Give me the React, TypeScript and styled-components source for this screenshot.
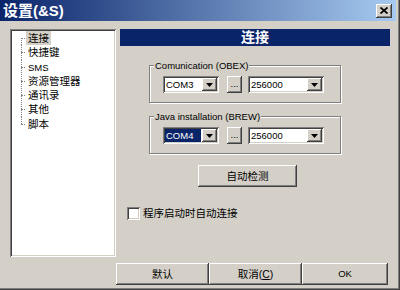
import React from "react";
import styled, { createGlobalStyle, css } from "styled-components";

const Global = createGlobalStyle`
  html, body { margin: 0; padding: 0; background: #d4d0c8; }
  body {
    font-family: "Liberation Sans", "Noto Sans CJK SC", sans-serif;
    font-size: 10.5px;
    color: #000;
  }
  * { box-sizing: border-box; }
`;

const latin = css`
  font-family: "Liberation Sans", sans-serif;
  font-size: 9.5px;
`;

const raised = css`
  background: #d4d0c8;
  box-shadow: inset -1px -1px #404040, inset 1px 1px #ffffff,
    inset -2px -2px #808080, inset 2px 2px #d4d0c8;
`;

const sunken = css`
  box-shadow: inset 1px 1px #808080, inset -1px -1px #ffffff,
    inset 2px 2px #404040, inset -2px -2px #d4d0c8;
`;

const Window = styled.div`
  width: 400px;
  height: 290px;
  background: #d4d0c8;
  display: flex;
  flex-direction: column;
  border-right: 1px solid #404040;
  border-bottom: 1px solid #404040;
  box-shadow: inset -1px -1px #808080;
  overflow: hidden;
`;

const TitleBar = styled.div`
  height: 21px;
  margin-right: 3px;
  display: flex;
  align-items: center;
  padding: 0 4px 0 3px;
  background: linear-gradient(to right, #0a246a, #a6caf0);
  color: #fff;
  font-weight: bold;
  font-size: 15px;
  line-height: 21px;
`;

const CloseButton = styled.div`
  width: 16px;
  height: 14px;
  margin-left: auto;
  ${raised};
  display: flex;
  align-items: center;
  justify-content: center;
`;

const Main = styled.div`
  display: flex;
  align-items: flex-start;
  padding: 8px 0 0 10px;
`;

const Tree = styled.div`
  width: 106px;
  height: 228px;
  background: #fff;
  ${sunken};
  padding: 2px;
`;

const TreeItem = styled.div<{ $first?: boolean; $last?: boolean }>`
  position: relative;
  height: 14.3px;
  line-height: 14px;
  padding-left: 14px;
  white-space: nowrap;
  &::before {
    content: "";
    position: absolute;
    left: 9px;
    top: 7px;
    width: 4px;
    border-top: 1px dotted #808080;
  }
  &::after {
    content: "";
    position: absolute;
    left: 9px;
    top: ${(p) => (p.$first ? "7px" : "0")};
    height: ${(p) => (p.$last || p.$first ? "7px" : "15px")};
    border-left: 1px dotted #808080;
  }
`;

const TreeLabel = styled.span<{ $selected?: boolean; $latin?: boolean }>`
  display: inline-block;
  padding: 0 2px;
  height: 14px;
  background: ${(p) => (p.$selected ? "#d4d0c8" : "transparent")};
  ${(p) => (p.$latin ? latin : "")};
`;

const RightCol = styled.div`
  margin-left: 4px;
  width: 270px;
  display: flex;
  flex-direction: column;
  align-items: flex-start;
`;

const Header = styled.div`
  width: 270px;
  height: 17px;
  background: #0a246a;
  color: #fff;
  font-weight: bold;
  font-size: 14px;
  line-height: 17px;
  text-align: center;
`;

const GroupBox = styled.div<{ $top: number }>`
  position: relative;
  margin-left: 29px;
  margin-top: ${(p) => p.$top}px;
  width: 192px;
  height: 38px;
  border: 1px solid #808080;
  box-shadow: inset 1px 1px #ffffff, 1px 1px #ffffff;
  padding: 10px 0 0 13px;
`;

const Legend = styled.span`
  position: absolute;
  top: -7px;
  left: 4px;
  padding: 0 1px;
  line-height: 13px;
  background: #d4d0c8;
  white-space: nowrap;
  ${latin};
`;

const Row = styled.div`
  display: flex;
  align-items: flex-start;
`;

const Combo = styled.div<{ $w: number; $gap?: number }>`
  width: ${(p) => p.$w}px;
  height: 17px;
  margin-left: ${(p) => p.$gap ?? 0}px;
  background: #fff;
  ${sunken};
  padding: 2px;
  display: flex;
`;

const ComboText = styled.div<{ $selected?: boolean }>`
  flex: 1;
  line-height: 13px;
  padding-left: 1px;
  margin-right: 1px;
  background: ${(p) => (p.$selected ? "#0a246a" : "transparent")};
  color: ${(p) => (p.$selected ? "#fff" : "#000")};
  ${latin};
`;

const ComboButton = styled.div`
  width: 15px;
  height: 13px;
  ${raised};
  display: flex;
  align-items: center;
  justify-content: center;
`;

const DotsButton = styled.div<{ $gap: number }>`
  width: 15px;
  height: 17px;
  margin-left: ${(p) => p.$gap}px;
  ${raised};
  display: flex;
  align-items: flex-end;
  justify-content: center;
  line-height: 12px;
  padding-bottom: 3px;
  ${latin};
`;

const PushButton = styled.div<{ $w: number; $latin?: boolean }>`
  width: ${(p) => p.$w}px;
  height: 22px;
  ${raised};
  display: flex;
  align-items: center;
  justify-content: center;
  line-height: 14px;
  ${(p) => (p.$latin ? latin : "")};
`;

const DetectWrap = styled.div`
  margin: 11px 0 0 78px;
`;

const CheckRow = styled.div`
  margin: 20px 0 0 7px;
  display: flex;
  align-items: center;
  gap: 3px;
  line-height: 13px;
`;

const CheckBox = styled.div`
  width: 13px;
  height: 13px;
  background: #fff;
  ${sunken};
`;

const Footer = styled.div`
  display: flex;
  margin-top: 6px;
  padding-left: 116px;
`;

const Arrow = () => (
  <svg width="7" height="4" viewBox="0 0 7 4">
    <path d="M0 0H7L3.5 4Z" fill="#000" />
  </svg>
);

const CloseIcon = () => (
  <svg width="8" height="7" viewBox="0 0 8 7">
    <path d="M0.5 0.5L7.5 6.5M7.5 0.5L0.5 6.5" stroke="#000" strokeWidth="1.8" />
  </svg>
);

const treeItems = ["连接", "快捷键", "SMS", "资源管理器", "通讯录", "其他", "脚本"];

const ComboRow = ({ port, selected }: { port: string; selected?: boolean }) => (
  <Row>
    <Combo $w={56}>
      <ComboText $selected={selected}>{port}</ComboText>
      <ComboButton>
        <Arrow />
      </ComboButton>
    </Combo>
    <DotsButton $gap={8}>...</DotsButton>
    <Combo $w={76} $gap={6}>
      <ComboText>256000</ComboText>
      <ComboButton>
        <Arrow />
      </ComboButton>
    </Combo>
  </Row>
);

export default function App() {
  return (
    <>
      <Global />
      <Window>
        <TitleBar>
          设置(&amp;S)
          <CloseButton>
            <CloseIcon />
          </CloseButton>
        </TitleBar>
        <Main>
          <Tree>
            {treeItems.map((t, i) => (
              <TreeItem key={t} $first={i === 0} $last={i === treeItems.length - 1}>
                <TreeLabel $selected={i === 0} $latin={t === "SMS"}>
                  {t}
                </TreeLabel>
              </TreeItem>
            ))}
          </Tree>
          <RightCol>
            <Header>连接</Header>
            <GroupBox $top={19}>
              <Legend>Comunication (OBEX)</Legend>
              <ComboRow port="COM3" />
            </GroupBox>
            <GroupBox $top={13}>
              <Legend>Java installation (BREW)</Legend>
              <ComboRow port="COM4" selected />
            </GroupBox>
            <DetectWrap>
              <PushButton $w={99}>自动检测</PushButton>
            </DetectWrap>
            <CheckRow>
              <CheckBox />
              程序启动时自动连接
            </CheckRow>
          </RightCol>
        </Main>
        <Footer>
          <PushButton $w={93}>默认</PushButton>
          <PushButton $w={93}>
            取消(<u>C</u>)
          </PushButton>
          <PushButton $w={86} $latin>
            OK
          </PushButton>
        </Footer>
      </Window>
    </>
  );
}
